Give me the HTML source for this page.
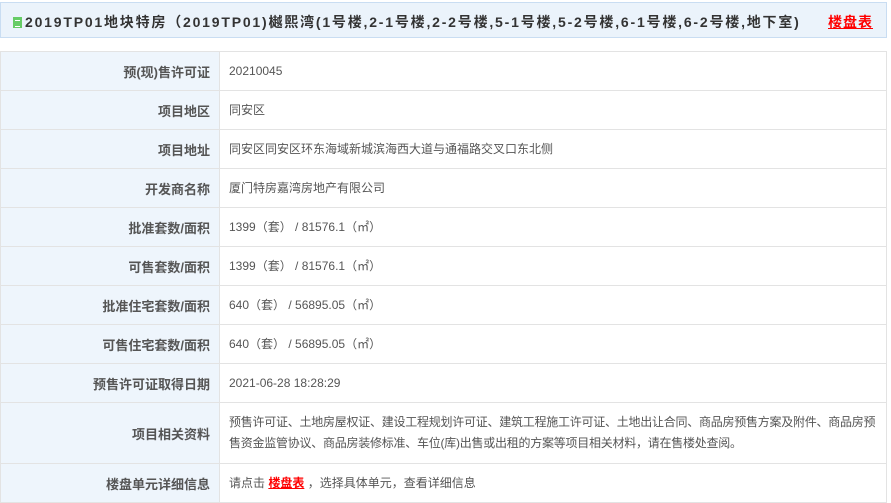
<!DOCTYPE html>
<html><head><meta charset="utf-8"><style>
body{margin:0;background:#fff;font-family:"Liberation Sans","Noto Sans CJK SC",sans-serif;width:891px;height:495px;overflow:hidden}
.hd{position:absolute;left:0;top:2px;width:885px;height:34px;background:#ebf3fb;border:1px solid #c9ddf2;}
.hd .t{position:absolute;left:12px;top:9px;font-size:14px;font-weight:bold;color:#333;letter-spacing:1.8px;white-space:nowrap}
.hd a{position:absolute;left:827px;top:9px;font-size:14px;font-weight:bold;color:#f00;text-decoration:underline;letter-spacing:1px}
.ic{display:inline-block;width:9px;height:11px;background:#6c6;vertical-align:-1px;margin-right:3px;position:relative}
.ic:after{content:"";position:absolute;left:2px;top:3px;width:5px;height:5px;border-top:1px solid #fff;border-bottom:1px solid #fff}
table{position:absolute;left:0;top:51px;width:887px;border-collapse:collapse;table-layout:fixed}
td{border:1px solid #e3e3e3;height:38px;padding:0;font-size:12px;color:#555;overflow:hidden}
td.l{background:#eef5fc;text-align:right;padding-right:9px;font-weight:bold;font-size:13px;color:#555}
td.v{padding-left:9px;padding-right:0;line-height:21px}
td.w{white-space:nowrap;letter-spacing:-0.25px}
td a{color:#f00;font-weight:bold;text-decoration:underline}
</style></head><body>
<div class="hd"><div class="t"><span class="ic"></span>2019TP01地块特房（2019TP01)樾熙湾(1号楼,2-1号楼,2-2号楼,5-1号楼,5-2号楼,6-1号楼,6-2号楼,地下室)</div><a>楼盘表</a></div>
<table>
<colgroup><col style="width:219px"><col></colgroup>
<tr><td class="l">预(现)售许可证</td><td class="v">20210045</td></tr>
<tr><td class="l">项目地区</td><td class="v">同安区</td></tr>
<tr><td class="l">项目地址</td><td class="v">同安区同安区环东海域新城滨海西大道与通福路交叉口东北侧</td></tr>
<tr><td class="l">开发商名称</td><td class="v">厦门特房嘉湾房地产有限公司</td></tr>
<tr><td class="l">批准套数/面积</td><td class="v">1399（套） / 81576.1（㎡）</td></tr>
<tr><td class="l">可售套数/面积</td><td class="v">1399（套） / 81576.1（㎡）</td></tr>
<tr><td class="l">批准住宅套数/面积</td><td class="v">640（套） / 56895.05（㎡）</td></tr>
<tr><td class="l">可售住宅套数/面积</td><td class="v">640（套） / 56895.05（㎡）</td></tr>
<tr><td class="l">预售许可证取得日期</td><td class="v">2021-06-28 18:28:29</td></tr>
<tr><td class="l" style="height:60px">项目相关资料</td><td class="v w">预售许可证、土地房屋权证、建设工程规划许可证、建筑工程施工许可证、土地出让合同、商品房预售方案及附件、商品房预<br>售资金监管协议、商品房装修标准、车位(库)出售或出租的方案等项目相关材料，请在售楼处查阅。</td></tr>
<tr><td class="l">楼盘单元详细信息</td><td class="v">请点击 <a>楼盘表</a> ，选择具体单元，查看详细信息</td></tr>
</table>
</body></html>
